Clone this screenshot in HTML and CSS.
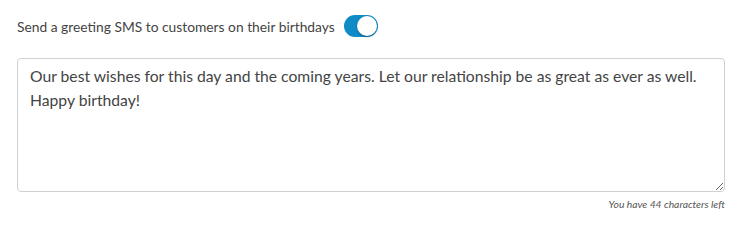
FILE: index.html
```html
<!DOCTYPE html>
<html lang="en">
<head>
  <meta charset="UTF-8">
  <title>Birthday SMS</title>
  <link rel="stylesheet" href="styles.css">
</head>
<body>
  <div class="sms-settings">
    <!-- toggle row -->
    <div class="toggle-row">
      <label for="birthdaySms">Send a greeting SMS to customers on their birthdays</label>
      <span class="switch">
        <input type="checkbox" id="birthdaySms" checked>
        <span class="slider"></span>
      </span>
    </div>

    <textarea class="message" rows="5">Our best wishes for this day and the coming years. Let our relationship be as great as ever as well. Happy birthday!</textarea>
    <div class="counter">You have 44 characters left</div>
  </div>
</body>
</html>
```

FILE: styles.css
```css
body {
  margin: 0;
  font-family: Lato, "Open Sans", sans-serif;
  background-color: #fff;
  color: #444;
}
.sms-settings {
  padding: 14px 25px 0 17px;
}
.toggle-row {
  display: flex;
  align-items: center;
  gap: 9px;
  height: 24px;
}
.toggle-row label {
  font-size: 13.8px;
  color: #444;
}
.switch {
  position: relative;
  display: inline-block;
  width: 34px;
  height: 22px;
}
.switch input {
  display: none;
}
.slider {
  position: absolute;
  inset: 0;
  background-color: #0f8bc8;
  border-radius: 11px;
}
.slider::after {
  content: "";
  position: absolute;
  top: 1px;
  right: 1px;
  width: 20px;
  height: 20px;
  border-radius: 50%;
  background-color: #fff;
  box-shadow: 0 1px 2px rgba(0, 0, 0, 0.35);
}
.message {
  display: block;
  box-sizing: border-box;
  width: 100%;
  height: 134px;
  margin-top: 20px;
  padding: 5px 12px;
  border: 1px solid #ccd1d6;
  border-radius: 4px;
  font-family: Lato, "Open Sans", sans-serif;
  font-size: 15.7px;
  line-height: 24px;
  color: #444;
  resize: vertical;
}
.counter {
  text-align: right;
  font-size: 10.3px;
  font-style: italic;
  color: #555;
  margin-top: 6px;
}
```
